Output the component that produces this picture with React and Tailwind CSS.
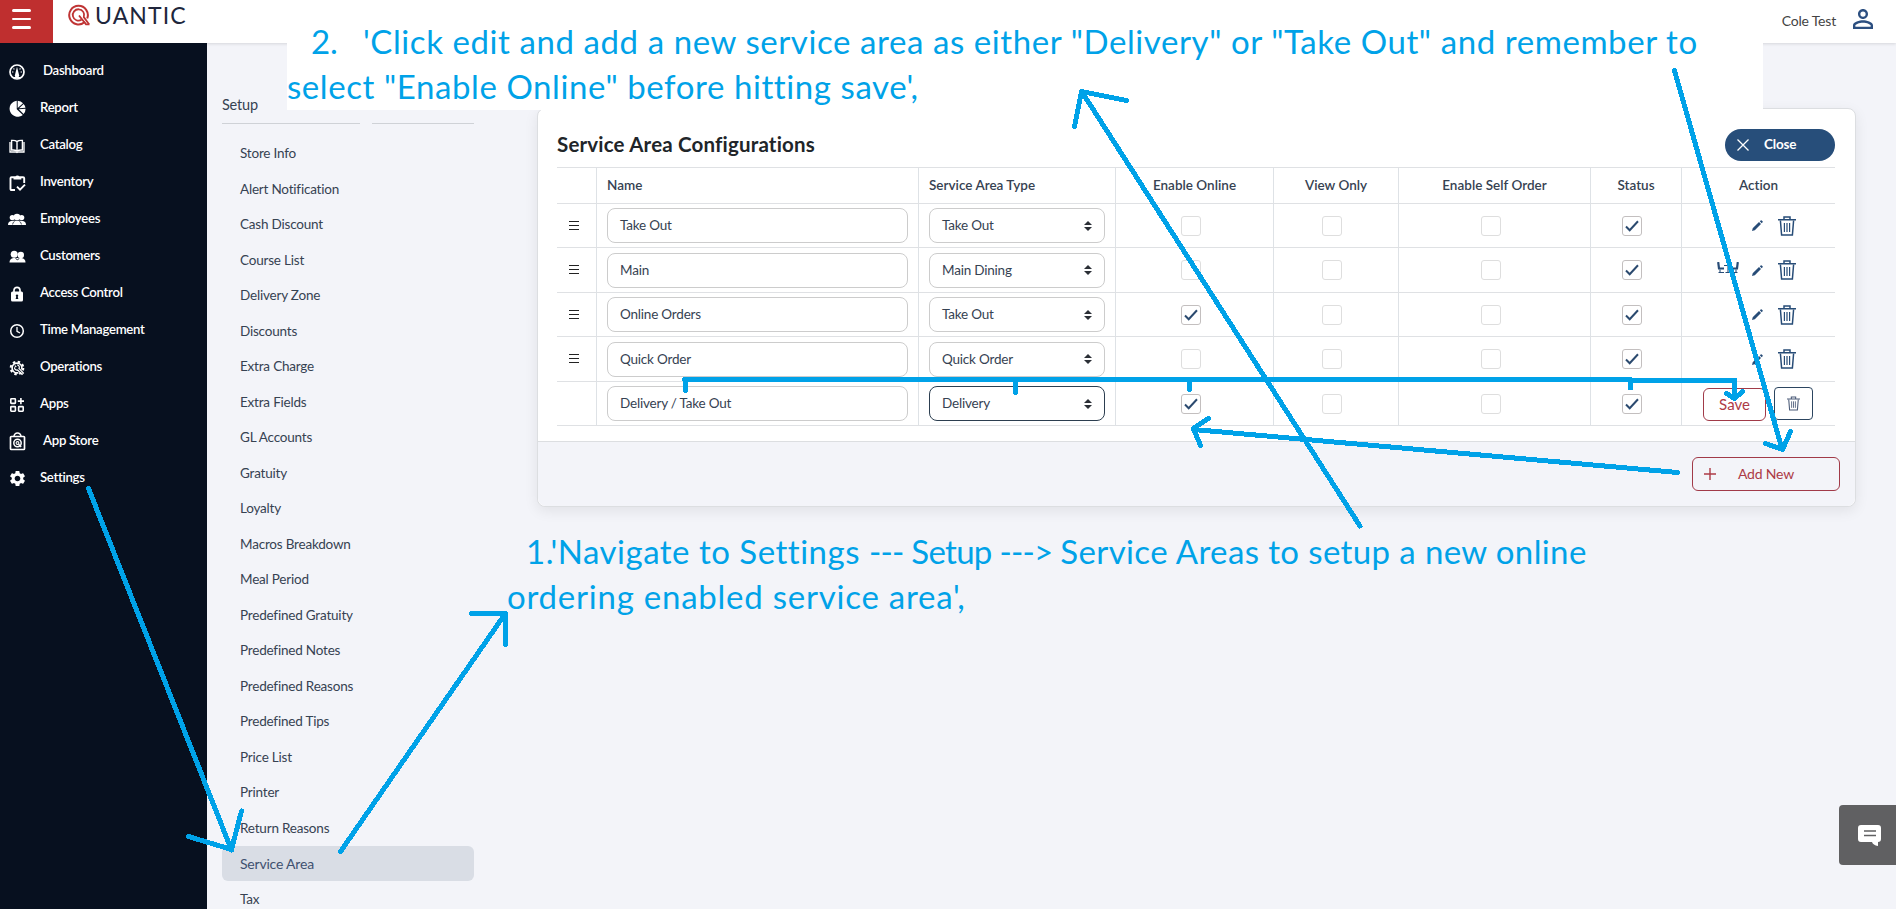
import React from 'react';
import { MdSettings, MdPersonOutline } from 'react-icons/md';

const Svg = ({ children, className = 'size-4', box = '0 0 16 16' }) => (
  <svg viewBox={box} className={className} fill="none" stroke="currentColor">{children}</svg>
);

const icons = {
  gauge: (
    <Svg>
      <circle cx="8" cy="8" r="7" strokeWidth="1.7" />
      <path d="M8 2.8 L10.200 11.500 A2.200 2.200 0 0 1 5.800 11.500 Z" fill="currentColor" stroke="none" />
      <path d="M3 8h1.4M11.6 8H13M4.5 4.5l.9.9M11.5 4.5l-.9.9M5 13.6h6" strokeWidth="1.1" />
    </Svg>
  ),
  pie: (
    <Svg className="size-[17px]">
      <path d="M7.3.6V8.6L13 14A7.6 7.6 0 1 1 7.3.6Z" fill="currentColor" stroke="none" />
      <path d="M8.2.7A7.4 7.4 0 0 1 13.2 3L8.2 7.600Z" fill="currentColor" stroke="none" />
      <path d="M13.800 3.700A7.4 7.4 0 0 1 15.500 7.400L9.500 7.800Z" fill="currentColor" stroke="none" />
      <path d="M9.200 8.700 15.600 8.3A7 7 0 0 1 13.700 13.200Z" fill="currentColor" stroke="none" />
    </Svg>
  ),
  book: (
    <Svg>
      <path d="M8 3.6C6.6 2.4 4.6 2.2 2.6 2.4V12c2-.2 4 0 5.4 1.2C9.4 12 11.4 11.800 13.400 12V2.400C11.400 2.200 9.400 2.400 8 3.600ZM8 3.600V13" strokeWidth="1.4" />
      <path d="M1 4v10h6l1 .6 1-.6h6V4" strokeWidth="1.3" />
    </Svg>
  ),
  clipboard: (
    <Svg className="h-[18px] w-[17px]" box="0 0 17 18">
      <path d="M6 16H2.600Q1.500 16 1.500 15V4.200Q1.500 3.200 2.600 3.200H14Q15.200 3.200 15.200 4.200V9" strokeWidth="1.900" />
      <path d="M4.500 5.600V3H6.400A2.100 2.100 0 0 1 10.400 3H12.300V5.600Z" fill="currentColor" stroke="none" />
      <path d="M8 12.600l3 3 5-5" strokeWidth="1.900" />
    </Svg>
  ),
  group: (
    <Svg className="h-[13px] w-[18px]" box="0 0 18 13">
      <g fill="currentColor" stroke="none">
        <circle cx="4.300" cy="4.500" r="2.600" /><circle cx="13.700" cy="4.500" r="2.600" />
        <path d="M0 12q0-4 4-4.300h10q4 .3 4 4.300Z" /><circle cx="9" cy="4" r="3.300" />
      </g>
      <path d="M4.600 11.500q0-2.300 2-3M13.400 11.500q0-2.300-2-3" strokeWidth=".7" className="stroke-[#07101f]" />
    </Svg>
  ),
  pair: (
    <Svg className="h-[13px] w-[17px]" box="0 0 17 13">
      <g fill="currentColor" stroke="none">
        <circle cx="5.200" cy="4.300" r="3.500" /><circle cx="11.800" cy="5" r="3.200" />
        <path d="M.5 12.500q0-4 4-4.500h8q4 .5 4 4.500Z" />
      </g>
      <path d="M6.500 8.500q2 2.400 3.800 0" strokeWidth=".9" className="stroke-[#07101f]" />
    </Svg>
  ),
  lock: (
    <Svg>
      <path d="M5 6V4.300a3 3 0 0 1 6 0V6" strokeWidth="1.700" />
      <rect x="2" y="5.600" width="12" height="9.800" rx="1.500" fill="currentColor" stroke="none" />
      <path d="M8 8.500a1.200 1.200 0 0 1 .7 2.200l.7 2.300H6.600l.7-2.300A1.200 1.200 0 0 1 8 8.500Z" stroke="none" className="fill-[#07101f]" />
    </Svg>
  ),
  clock: (
    <Svg>
      <circle cx="8" cy="8" r="6.300" strokeWidth="1.500" />
      <path d="M8 4v4.300l3 1.700" strokeWidth="1.300" />
    </Svg>
  ),
  ops: (
    <Svg>
      <circle cx="8" cy="8" r="4.900" strokeWidth="1.600" strokeDasharray="26.500 4.300" strokeDashoffset="-6" />
      <circle cx="8" cy="8" r="6.300" strokeWidth="2" strokeDasharray="2.470 2.470" />
      <path d="M5.800 5.600 7.300 7M8 5a2.200 2.200 0 0 1 2 3.400L14.400 13l-1.400 1.400L8.600 10A2.300 2.300 0 0 1 5.600 7.300" strokeWidth="1.200" />
    </Svg>
  ),
  apps: (
    <Svg>
      <rect x="1.800" y="1.800" width="4.600" height="4.600" rx=".6" strokeWidth="1.600" />
      <rect x="1.800" y="9.600" width="4.600" height="4.600" rx=".6" strokeWidth="1.600" />
      <rect x="9.600" y="9.600" width="4.600" height="4.600" rx=".6" strokeWidth="1.600" />
      <path d="M11.900 1v6.200M8.800 4.100H15" strokeWidth="1.600" />
    </Svg>
  ),
  store: (
    <Svg className="h-[19px] w-[17px]" box="0 0 17 19">
      <rect x="1.500" y="4.500" width="14" height="13" rx=".8" strokeWidth="1.700" />
      <path d="M5 4.500a3.500 3.500 0 0 1 7 0" strokeWidth="1.600" />
      <circle cx="8.500" cy="11" r="3.700" strokeWidth="1.500" />
      <circle cx="8.500" cy="11" r="1.400" strokeWidth="1.100" />
      <path d="M9.500 12.200l2.700 2.700" strokeWidth="1.500" />
    </Svg>
  ),
  settings: <MdSettings className="size-[19px]" />,
};

const nav = [
  ['gauge', 'Dashboard', 'pl-[3px]'],
  ['pie', 'Report', ''],
  ['book', 'Catalog', ''],
  ['clipboard', 'Inventory', ''],
  ['group', 'Employees', ''],
  ['pair', 'Customers', ''],
  ['lock', 'Access Control', ''],
  ['clock', 'Time Management', ''],
  ['ops', 'Operations', ''],
  ['apps', 'Apps', ''],
  ['store', 'App Store', 'pl-[3px]'],
  ['settings', 'Settings', ''],
];

const setup = [
  'Store Info', 'Alert Notification', 'Cash Discount', 'Course List', 'Delivery Zone', 'Discounts',
  'Extra Charge', 'Extra Fields', 'GL Accounts', 'Gratuity', 'Loyalty', 'Macros Breakdown',
  'Meal Period', 'Predefined Gratuity', 'Predefined Notes', 'Predefined Reasons', 'Predefined Tips',
  'Price List', 'Printer', 'Return Reasons', 'Service Area', 'Tax',
];

const rows = [
  { name: 'Take Out', type: 'Take Out' },
  { name: 'Main', type: 'Main Dining', table: true },
  { name: 'Online Orders', type: 'Take Out', online: true },
  { name: 'Quick Order', type: 'Quick Order' },
  { name: 'Delivery / Take Out', type: 'Delivery', online: true, editing: true },
];

const grid = 'grid grid-cols-[39px_322px_197px_158px_125px_192px_91px_154px]';

function Trash({ className }) {
  return (
    <svg viewBox="0 0 18 20" className={className} fill="none" stroke="currentColor">
      <path d="M0 3.700H18M6 3.300V1H12V3.300" strokeWidth="1.500" />
      <path d="M2.400 4.500 3.600 19H14.400L15.600 4.500" strokeWidth="1.500" />
      <path d="M6.400 7V16M9 7V16M11.600 7V16" strokeWidth="1.200" />
    </svg>
  );
}

function Pencil() {
  return (
    <svg viewBox="0 0 11 11" className="size-[11px] text-[#274c77]" fill="currentColor">
      <path d="M0 11 .7 8.200 7 2 9 4 2.800 10.300ZM7.800 1.300 8.700.4Q9.200 0 9.700.4L10.600 1.300Q11 1.800 10.600 2.300L9.700 3.200Z" />
    </svg>
  );
}

function TableChairs() {
  return (
    <svg viewBox="0 0 22 12" className="h-3 w-[22px] text-[#274c77]" fill="none" stroke="currentColor">
      <path d="M1.200 0 2 6.500H7M20.800 0 20 6.500H15" strokeWidth="2.200" />
      <path d="M7 3.500H15M11 3.500V10M1.500 10.500H7M8.500 10.500H13.500M15 10.500H20.500M3 7.500V10.500M19 7.500V10.500" strokeWidth="1.100" />
    </svg>
  );
}

function Check({ on }) {
  return (
    <span className={`flex size-5 items-center justify-center rounded-[3px] border bg-white ${on ? 'border-[#c3bfbf]' : 'border-[#dedede]'}`}>
      {on && (
        <svg viewBox="0 0 14 12" className="h-3 w-3.5" fill="none" stroke="#2b4a6f" strokeWidth="2">
          <path d="M1 6.500 4.700 10.200 13 1.300" />
        </svg>
      )}
    </span>
  );
}

const cell = 'border-l border-[#dee2e6]';

function Row({ r, height }) {
  return (
    <div className={`${grid} ${height} border-b border-[#dfe1e4]`}>
      <div className="flex items-center pl-3">
        {!r.editing && (
          <svg viewBox="0 0 10 10" className="size-2.5" stroke="#222" strokeWidth="1" shapeRendering="crispEdges">
            <path d="M0 .5H10M0 4.500H10M0 8.500H10" />
          </svg>
        )}
      </div>
      <div className={`${cell} flex items-center px-2.5`}>
        <div className="flex h-[35px] w-[301px] items-center rounded-lg border border-[#ccc] pl-3">{r.name}</div>
      </div>
      <div className={`${cell} flex items-center px-2.5`}>
        <div className={`flex h-[35px] w-[176px] items-center justify-between rounded-lg border pl-3 pr-3 ${r.editing ? 'border-[#2c3e50]' : 'border-[#ccc]'}`}>
          {r.type}
          <svg viewBox="0 0 8 10" className="h-2.5 w-2" fill="#2b2f36"><path d="M0 4 4 0 8 4ZM0 6H8L4 10Z" /></svg>
        </div>
      </div>
      <div className={`${cell} flex items-center pl-[65px]`}><Check on={r.online} /></div>
      <div className={`${cell} flex items-center pl-12`}><Check /></div>
      <div className={`${cell} flex items-center pl-[82px]`}><Check /></div>
      <div className={`${cell} flex items-center pl-[31px]`}><Check on /></div>
      {r.editing ? (
        <div className={`${cell} flex items-center gap-2 pl-[21px]`}>
          <div className="mt-px flex h-[33px] w-[63px] items-center justify-center rounded-md border border-[#a13a48] bg-white text-[15px] tracking-normal text-[#ad3a46]">Save</div>
          <div className="flex h-[33px] w-[39px] items-center justify-center rounded-sm border border-[#2c4560] bg-white">
            <Trash className="h-[15px] w-[13px] text-[#4b5b78]" />
          </div>
        </div>
      ) : (
        <div className={`${cell} flex items-center justify-end gap-[15px] pr-[39px]`}>
          {r.table && <span className="-mr-0.5 mb-1"><TableChairs /></span>}
          <Pencil />
          <Trash className="h-5 w-[18px] text-[#274c77]" />
        </div>
      )}
    </div>
  );
}

const rowHeights = ['h-11', 'h-[45px]', 'h-11', 'h-[45px]', 'h-11'];

export default function App() {
  return (
    <div className="relative flex h-[909px] w-[1896px] flex-col overflow-hidden bg-[#f3f4f9] font-['Lato','Open_Sans',sans-serif] text-[13.5px] tracking-[-0.2px] text-[#364252]">
      <header className="flex h-[43px] shrink-0 items-start bg-white shadow-[0_1px_3px_rgba(0,0,0,0.12)]">
        <div className="flex h-[44px] w-[53px] flex-col gap-[6px] bg-[#bf2f2f] pl-3 pt-[9px]">
          <span className="h-[2.5px] w-[19px] rounded bg-white" />
          <span className="h-[2.5px] w-[19px] rounded bg-white" />
          <span className="h-[2.5px] w-[19px] rounded bg-white" />
        </div>
        <div className="flex pl-[15px] pt-1">
          <svg viewBox="0 0 22 22" className="size-[22px]" fill="none" stroke="#bf3434">
            <path d="M17 17.800A9.300 9.300 0 1 1 19.200 14.500" strokeWidth="2" />
            <path d="M13.500 15.800A5.700 5.700 0 1 1 15.800 13L21 20.300" strokeWidth="1.800" />
            <path d="M11 11.500 18 20.300H21.500" strokeWidth="1.800" />
          </svg>
          <span className="-mt-0.5 ml-[5px] text-[23px] leading-[26px] tracking-[1.1px] text-[#20263c]">UANTIC</span>
        </div>
        <div className="ml-auto flex items-center gap-[12px] pr-[18px] pt-[4px]">
          <span className="pt-0.5 text-[14px] text-[#444]">Cole Test</span>
          <MdPersonOutline className="size-[30px] text-[#2c4f80]" />
        </div>
      </header>

      <div className="flex min-h-0 flex-1">
        <nav className="flex w-[207px] shrink-0 flex-col bg-[#07101f] pt-[9px] text-white">
          {nav.map(([icon, label, pad]) => (
            <div key={label} className="flex h-[37px] shrink-0 items-center">
              <span className="flex w-[34px] justify-center pt-0.5">{icons[icon]}</span>
              <span className={`ml-1.5 text-[13.200px] font-semibold tracking-[-0.300px] ${pad}`}>{label}</span>
            </div>
          ))}
        </nav>

        <aside className="w-[267px] shrink-0 pl-[15px] pt-[51px]">
          <div className="h-[29px] text-[14.500px] leading-[22px]">Setup</div>
          <div className="flex gap-3 pb-[11.500px]">
            <span className="h-px w-[138px] bg-[#cfd2d7]" />
            <span className="h-px w-[102px] bg-[#cfd2d7]" />
          </div>
          {setup.map((s) => (
            <div key={s} className={`flex h-[35.500px] items-center rounded-md pl-[18px] ${s === 'Service Area' ? 'bg-[#d9dde5] text-[14px] text-[#3f5170]' : ''}`}>{s}</div>
          ))}
        </aside>

        <main className="pl-[63px] pt-[65px]">
          <section className="flex h-[399px] w-[1319px] flex-col rounded-lg border border-[#dcdee1] bg-white shadow-[0_4px_14px_rgba(0,0,0,0.08)]">
            <div className="flex h-[58px] items-center justify-between pl-[19px] pr-5 pt-[13px]">
              <h1 className="text-[20.500px] font-bold tracking-[0.180px] text-[#212529]">Service Area Configurations</h1>
              <div className="flex h-8 w-[110px] items-center rounded-full bg-[#274e7a] pl-3 font-bold text-white">
                <svg viewBox="0 0 12 12" className="size-3" stroke="white" strokeWidth="1.300"><path d="M.5.5 11.500 11.500M11.500.5.5 11.500" /></svg>
                <span className="ml-[15px]">Close</span>
              </div>
            </div>
            <div className="ml-[19px] w-[1278px]">
              <div className={`${grid} h-[37px] border-y border-[#dfe1e4] font-semibold leading-[34px] tracking-[0.010px]`}>
                <div />
                <div className={`${cell} pl-2.5`}>Name</div>
                <div className={`${cell} pl-2.5`}>Service Area Type</div>
                <div className={`${cell} text-center`}>Enable Online</div>
                <div className={`${cell} text-center`}>View Only</div>
                <div className={`${cell} text-center`}>Enable Self Order</div>
                <div className={`${cell} text-center`}>Status</div>
                <div className={`${cell} text-center`}>Action</div>
              </div>
              {rows.map((r, i) => <Row key={r.name} r={r} height={rowHeights[i]} />)}
            </div>
            <div className="mt-auto flex h-[65px] shrink-0 justify-end rounded-b-lg border-t border-[#dcdee1] bg-[#f3f4f9] pr-[15px] pt-[15px]">
              <div className="flex h-[34px] w-[148px] items-center rounded-md border border-[#a13a48] pl-[11px] text-[#ad3a46]">
                <svg viewBox="0 0 12 12" className="size-3" stroke="currentColor" strokeWidth="1.400"><path d="M6 0V12M0 6H12" /></svg>
                <span className="mb-px ml-[22px] text-[14px]">Add New</span>
              </div>
            </div>
          </section>
        </main>
      </div>

      <div className="absolute left-[287px] top-0 h-[110px] w-[1476px] whitespace-pre bg-white text-[33px] leading-[45px] text-[#00a2e8]">
        <p className="mt-[19px] pl-[24px]"><span className="inline-block w-[52px]">2.</span><span className="tracking-[0.580px]">'Click edit and add a new service area as either "Delivery" or "Take Out" and remember to</span></p>
        <p><span className="tracking-[0.580px]">select "Enable Online" before hitting save',</span></p>
      </div>
      <div className="absolute left-[507px] top-[529px] whitespace-pre text-[33px] leading-[45px] text-[#00a2e8]">
        <p className="pl-[19px]"><span className="tracking-[0.500px]">1.'Navigate to Settings </span><span className="tracking-[-0.700px]">--- Setup ---&gt; </span><span className="tracking-[0.380px]">Service Areas to setup a new online</span></p>
        <p><span className="tracking-[0.760px]">ordering enabled service area',</span></p>
      </div>

      <svg viewBox="0 0 1896 909" className="absolute inset-0 h-[909px] w-[1896px]" fill="none" stroke="#00a2e8" strokeWidth="5" strokeLinecap="round" strokeLinejoin="round" shapeRendering="crispEdges">
        <path d="M88.500 488.500 231.500 850M188.500 836.500 231.500 849.500 241.500 811" />
        <path d="M340.500 851.500 505 614M471.500 613.500H505.500V644.500" />
        <path d="M1360 526 1082 92M1126.500 100.500 1081.500 91.500 1074.500 126.500" />
        <path d="M1674.500 70.500 1782 449M1765.500 443.500 1782.500 449.500 1790.500 431.500" />
        <path d="M1677.500 472.500 1193.500 429.500M1208.500 418.500 1193.500 428.500 1200.500 445.500" />
        <path d="M684.500 379.500H1630.500V380.500H1735M685.500 379.500V390.500M1015.500 380V392.500M1189.500 380V389.500M1630.500 380V388M1734.500 380V397M1726.500 393.500 1734.500 398.500 1742.500 391.500" />
      </svg>

      <div className="absolute left-[1839px] top-[805px] flex h-[60px] w-[57px] items-center justify-center rounded-l bg-[#606062]">
        <svg viewBox="0 0 23 21" className="mr-[-3px] h-[21px] w-[23px]">
          <path d="M3 0H20Q23 0 23 3V14Q23 17 20 17V21Q15 20 14 17H3Q0 17 0 14V3Q0 0 3 0Z" fill="white" />
          <path d="M6 6H18M6 10.500H18" stroke="#606062" strokeWidth="1.300" />
        </svg>
      </div>
    </div>
  );
}
